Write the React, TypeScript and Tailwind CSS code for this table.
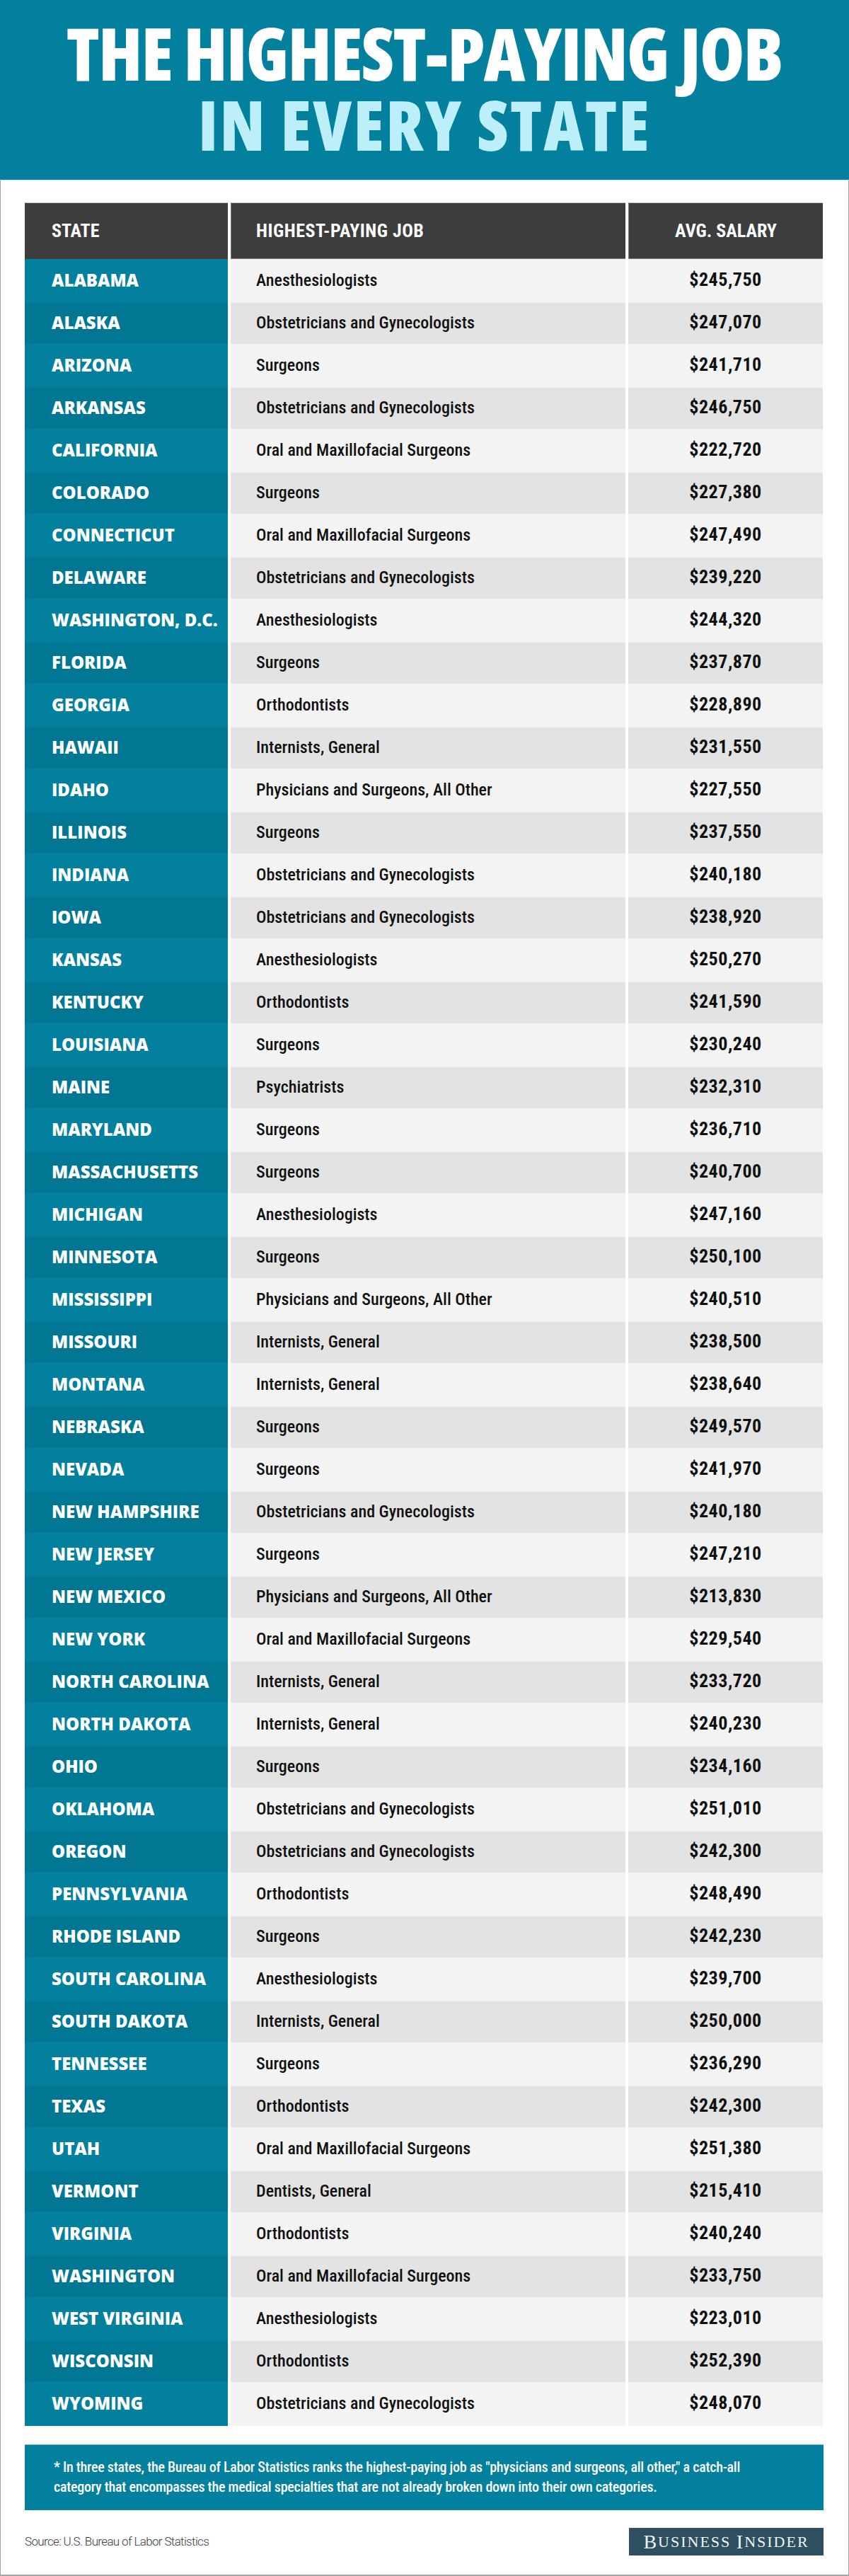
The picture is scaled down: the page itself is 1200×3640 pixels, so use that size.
const rows: [string, string, string][] = [
  ["ALABAMA", "Anesthesiologists", "$245,750"],
  ["ALASKA", "Obstetricians and Gynecologists", "$247,070"],
  ["ARIZONA", "Surgeons", "$241,710"],
  ["ARKANSAS", "Obstetricians and Gynecologists", "$246,750"],
  ["CALIFORNIA", "Oral and Maxillofacial Surgeons", "$222,720"],
  ["COLORADO", "Surgeons", "$227,380"],
  ["CONNECTICUT", "Oral and Maxillofacial Surgeons", "$247,490"],
  ["DELAWARE", "Obstetricians and Gynecologists", "$239,220"],
  ["WASHINGTON, D.C.", "Anesthesiologists", "$244,320"],
  ["FLORIDA", "Surgeons", "$237,870"],
  ["GEORGIA", "Orthodontists", "$228,890"],
  ["HAWAII", "Internists, General", "$231,550"],
  ["IDAHO", "Physicians and Surgeons, All Other", "$227,550"],
  ["ILLINOIS", "Surgeons", "$237,550"],
  ["INDIANA", "Obstetricians and Gynecologists", "$240,180"],
  ["IOWA", "Obstetricians and Gynecologists", "$238,920"],
  ["KANSAS", "Anesthesiologists", "$250,270"],
  ["KENTUCKY", "Orthodontists", "$241,590"],
  ["LOUISIANA", "Surgeons", "$230,240"],
  ["MAINE", "Psychiatrists", "$232,310"],
  ["MARYLAND", "Surgeons", "$236,710"],
  ["MASSACHUSETTS", "Surgeons", "$240,700"],
  ["MICHIGAN", "Anesthesiologists", "$247,160"],
  ["MINNESOTA", "Surgeons", "$250,100"],
  ["MISSISSIPPI", "Physicians and Surgeons, All Other", "$240,510"],
  ["MISSOURI", "Internists, General", "$238,500"],
  ["MONTANA", "Internists, General", "$238,640"],
  ["NEBRASKA", "Surgeons", "$249,570"],
  ["NEVADA", "Surgeons", "$241,970"],
  ["NEW HAMPSHIRE", "Obstetricians and Gynecologists", "$240,180"],
  ["NEW JERSEY", "Surgeons", "$247,210"],
  ["NEW MEXICO", "Physicians and Surgeons, All Other", "$213,830"],
  ["NEW YORK", "Oral and Maxillofacial Surgeons", "$229,540"],
  ["NORTH CAROLINA", "Internists, General", "$233,720"],
  ["NORTH DAKOTA", "Internists, General", "$240,230"],
  ["OHIO", "Surgeons", "$234,160"],
  ["OKLAHOMA", "Obstetricians and Gynecologists", "$251,010"],
  ["OREGON", "Obstetricians and Gynecologists", "$242,300"],
  ["PENNSYLVANIA", "Orthodontists", "$248,490"],
  ["RHODE ISLAND", "Surgeons", "$242,230"],
  ["SOUTH CAROLINA", "Anesthesiologists", "$239,700"],
  ["SOUTH DAKOTA", "Internists, General", "$250,000"],
  ["TENNESSEE", "Surgeons", "$236,290"],
  ["TEXAS", "Orthodontists", "$242,300"],
  ["UTAH", "Oral and Maxillofacial Surgeons", "$251,380"],
  ["VERMONT", "Dentists, General", "$215,410"],
  ["VIRGINIA", "Orthodontists", "$240,240"],
  ["WASHINGTON", "Oral and Maxillofacial Surgeons", "$233,750"],
  ["WEST VIRGINIA", "Anesthesiologists", "$223,010"],
  ["WISCONSIN", "Orthodontists", "$252,390"],
  ["WYOMING", "Obstetricians and Gynecologists", "$248,070"],
];

const heavy = "font-['Open_Sans',sans-serif] font-extrabold";
const cond = "font-['Roboto_Condensed','Roboto',sans-serif]";

const Title = () => (
  <header className="h-[255px] bg-[#02809e] border-b border-[#c3e8f0] flex flex-col items-center pt-[24px]">
    <h1 className={`${heavy} [font-stretch:75%] uppercase text-[102px] leading-[102px] tracking-[-1.6px] text-white whitespace-nowrap`}>
      THE HIGHEST-PAYING JOB
    </h1>
    <h2 className={`${heavy} [font-stretch:75%] uppercase text-[98px] leading-[98px] tracking-[2.3px] text-[#bdeffb] whitespace-nowrap`}>
      IN EVERY STATE
    </h2>
  </header>
);

const Table = () => (
  <div className="grid grid-cols-[287px_558px_275px] gap-x-1">
    <div className={`${cond} h-[80px] bg-[#3d3d3d] border-t border-[#cdcdcd] flex items-center pl-[38px] text-[26px] font-bold text-white`}>
      STATE
    </div>
    <div className={`${cond} h-[80px] bg-[#3d3d3d] border-t border-l border-b border-t-[#cdcdcd] border-l-[#7d7d7d] border-b-[#7d7d7d] flex items-center pl-[35px] text-[26px] tracking-[0.5px] font-bold text-white`}>
      HIGHEST-PAYING JOB
    </div>
    <div className={`${cond} h-[80px] bg-[#3d3d3d] border-t border-l border-b border-t-[#cdcdcd] border-l-[#7d7d7d] border-b-[#7d7d7d] flex items-center justify-center text-[26px] font-bold text-white`}>
      AVG. SALARY
    </div>
    {rows.map(([state, job, salary], i) => {
      const even = i % 2 === 0;
      return (
        <div key={state} className="contents">
          <div
            className={`${heavy} flex items-center pl-[38px] pb-[3px] text-[24px] text-white ${
              even ? "h-[62px] bg-[#02809e]" : "h-[58px] bg-[#017793]"
            }`}
          >
            {state}
          </div>
          <div
            className={`${cond} flex items-center pl-[36px] pb-[3px] text-[24px] font-medium text-[#111] ${
              even ? "bg-[#f3f3f3]" : "bg-[#e3e3e3]"
            }`}
          >
            {job}
          </div>
          <div
            className={`${cond} flex items-center justify-center pb-[3px] text-[26px] tracking-[0.5px] font-bold text-[#111] ${
              even ? "bg-[#f3f3f3]" : "bg-[#e3e3e3]"
            }`}
          >
            {salary}
          </div>
        </div>
      );
    })}
  </div>
);

export default function App() {
  return (
    <div className="w-[1200px] bg-white">
      <Title />
      <main className="border-x border-b-2 border-[#a3a3a3] pl-[34px] pr-[35px] pt-[31px] pb-[27px]">
        <Table />
        <div
          className={`${cond} mt-[26px] h-[93px] bg-[#02809e] border-t border-[#5fb3c7] pl-[41px] pt-[17px] text-[20px] leading-[28px] tracking-[-0.25px] font-medium text-white whitespace-nowrap`}
        >
          * In three states, the Bureau of Labor Statistics ranks the highest-paying job as "physicians and surgeons, all
          other," a catch-all
          <br />
          category that encompasses the medical specialties that are not already broken down into their own categories.
        </div>
        <div className="mt-[25px] flex items-center justify-between">
          <span className="font-['Roboto',sans-serif] text-[17px] font-light tracking-[-0.65px] text-[#3a3a3a]">
            Source: U.S. Bureau of Labor Statistics
          </span>
          <div className="w-[275px] h-[39px] bg-[#2e4f5f] flex items-center justify-center font-['Liberation_Serif',serif] text-[#eef3f5] tracking-[2px]">
            <span className="text-[28px] leading-none">B</span>
            <span className="text-[22px] leading-none">USINESS</span>
            <span className="text-[22px] leading-none">&nbsp;</span>
            <span className="text-[28px] leading-none">I</span>
            <span className="text-[22px] leading-none">NSIDER</span>
          </div>
        </div>
      </main>
    </div>
  );
}
